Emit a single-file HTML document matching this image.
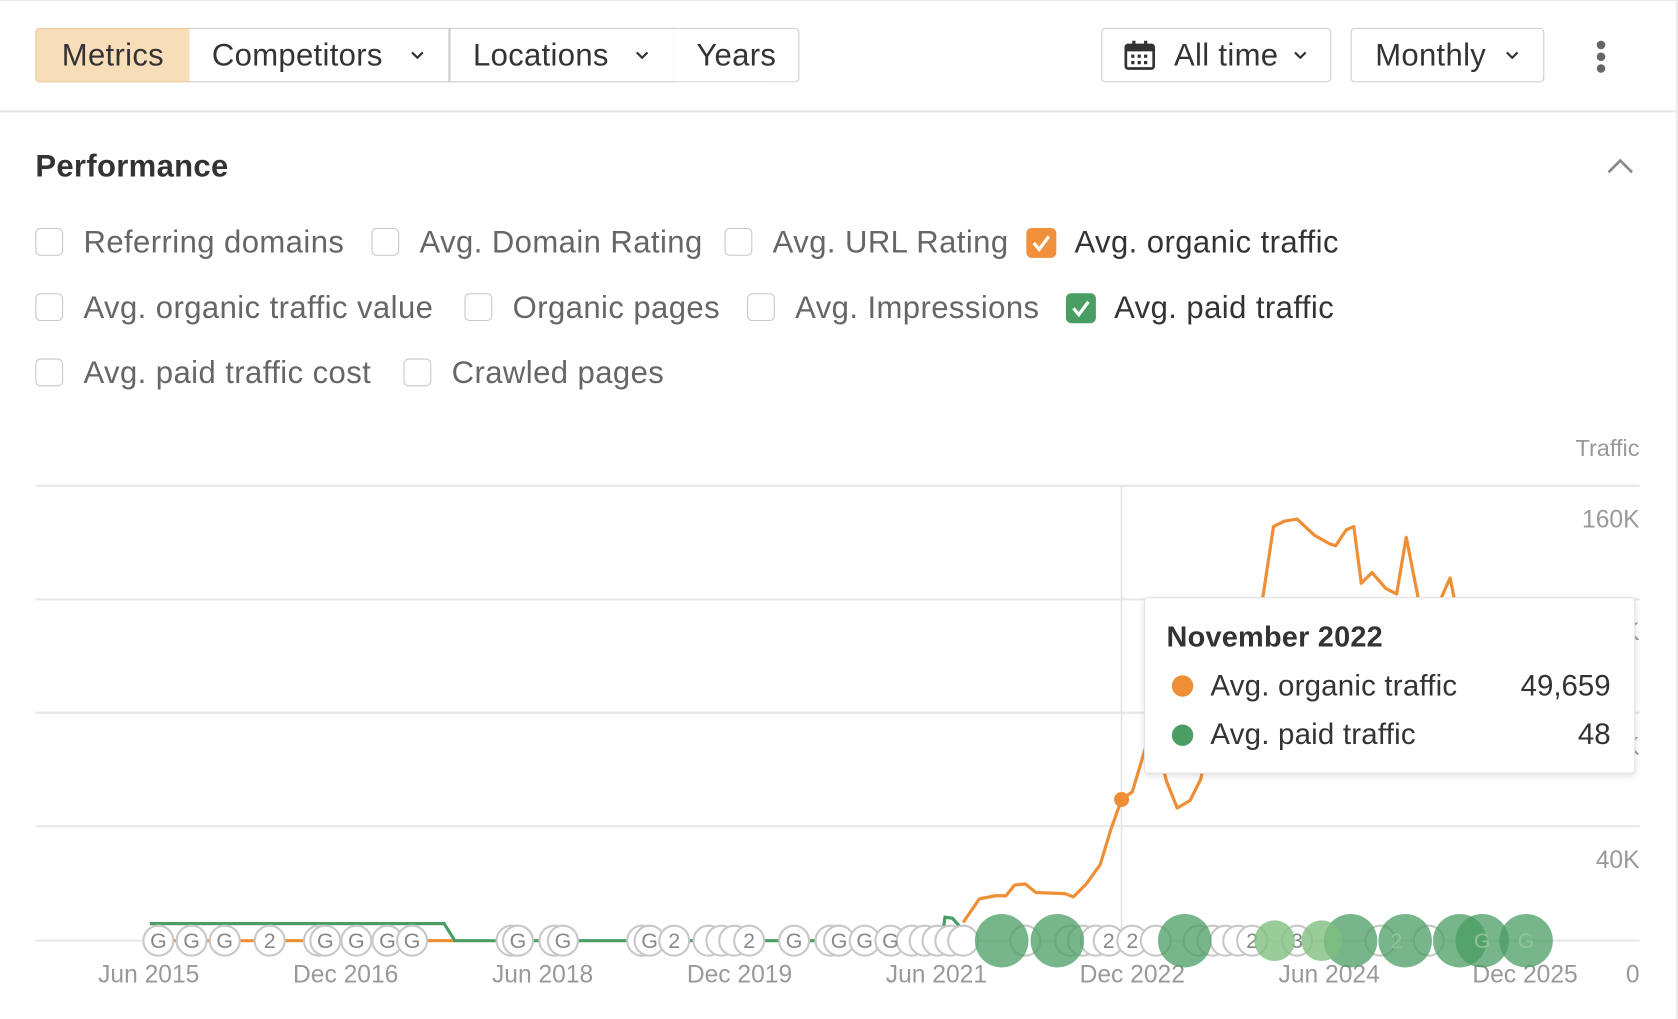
<!DOCTYPE html>
<html><head><meta charset="utf-8"><style>
html,body{margin:0;padding:0;background:#fff;overflow:hidden;width:1678px;height:1018px}
#w{position:absolute;left:0;top:0;width:1568px;height:952px;transform:scale(1.0702);transform-origin:0 0;font-family:"Liberation Sans",sans-serif;color:#333}
.a{position:absolute;white-space:nowrap}
.btn{position:absolute;top:26px;height:49px;border:1px solid #ccc;box-sizing:content-box;font-size:29px;letter-spacing:0.3px;line-height:51px;color:#333;background:#fff}
.cb{position:absolute;width:26px;height:26px;border:1.5px solid #c8c8c8;border-radius:5px;box-sizing:border-box}
.lab{position:absolute;font-size:29px;letter-spacing:0.4px;color:#666;line-height:30px}
.chk{position:absolute;width:28px;height:28px;border-radius:5px}
.chev{position:absolute;top:20px}
</style></head><body><div id="w">
<div class="a" style="left:0;top:0;width:1568px;height:1px;background:#e6e6e6"></div>
<div class="a" style="left:1566px;top:0;width:2px;height:952px;background:#ececec"></div>
<div class="a" style="left:0;top:103px;width:1566px;height:2px;background:#e8e8e8"></div>

<div class="btn" style="left:33px;width:143px;background:#f8ddb9;border-color:#e8c9a0;border-radius:4px 0 0 4px;text-align:center">Metrics</div>
<div class="btn" style="left:177px;width:242px;border-left:none"><span style="position:absolute;left:21px">Competitors</span><svg class="chev" style="left:206px" width="14" height="10"><path d="M2 2 L7 7 L12 2" fill="none" stroke="#333" stroke-width="2"/></svg></div>
<div class="btn" style="left:420px;width:209px"><span style="position:absolute;left:21px">Locations</span><svg class="chev" style="left:172px" width="14" height="10"><path d="M2 2 L7 7 L12 2" fill="none" stroke="#333" stroke-width="2"/></svg></div>
<div class="btn" style="left:630px;width:116px;border-left:none;border-radius:0 4px 4px 0;text-align:center">Years</div>

<div class="btn" style="left:1029px;width:213px;border-radius:4px">
<svg style="position:absolute;left:20px;top:11px" width="30" height="28" viewBox="0 0 30 28"><rect x="2" y="4" width="26" height="22" rx="2" fill="none" stroke="#333" stroke-width="2.5"/><rect x="2" y="4" width="26" height="6" fill="#333"/><rect x="8" y="0" width="3" height="6" fill="#333"/><rect x="19" y="0" width="3" height="6" fill="#333"/><g fill="#333"><rect x="7" y="13" width="3" height="3"/><rect x="13" y="13" width="3" height="3"/><rect x="19" y="13" width="3" height="3"/><rect x="7" y="19" width="3" height="3"/><rect x="13" y="19" width="3" height="3"/><rect x="19" y="19" width="3" height="3"/></g></svg>
<span style="position:absolute;left:67px">All time</span><svg class="chev" style="left:178px" width="14" height="10"><path d="M2 2 L7 7 L12 2" fill="none" stroke="#333" stroke-width="2"/></svg></div>
<div class="btn" style="left:1262px;width:179px;border-radius:4px"><span style="position:absolute;left:22px">Monthly</span><svg class="chev" style="left:143px" width="14" height="10"><path d="M2 2 L7 7 L12 2" fill="none" stroke="#333" stroke-width="2"/></svg></div>
<div class="a" style="left:1492px;top:38px;width:8px;height:8px;border-radius:4px;background:#666"></div>
<div class="a" style="left:1492px;top:49px;width:8px;height:8px;border-radius:4px;background:#666"></div>
<div class="a" style="left:1492px;top:60px;width:8px;height:8px;border-radius:4px;background:#666"></div>

<div class="a" style="left:33px;top:140px;font-size:29px;letter-spacing:0.3px;font-weight:bold;color:#333">Performance</div>
<svg class="a" style="left:1500px;top:146px" width="28" height="18"><path d="M3 15 L14 4 L25 15" fill="none" stroke="#888" stroke-width="2.5"/></svg>

<div class="cb" style="left:33px;top:213px"></div><div class="lab" style="left:78px;top:212px">Referring domains</div>
<div class="cb" style="left:347px;top:213px"></div><div class="lab" style="left:392px;top:212px">Avg. Domain Rating</div>
<div class="cb" style="left:677px;top:213px"></div><div class="lab" style="left:722px;top:212px">Avg. URL Rating</div>
<div class="chk" style="left:959px;top:213px;background:#f0903a"><svg width="28" height="28"><path d="M7 14 L12 20 L21 8" fill="none" stroke="#fff" stroke-width="3"/></svg></div><div class="lab" style="left:1004px;top:212px;color:#333">Avg. organic traffic</div>

<div class="cb" style="left:33px;top:274px"></div><div class="lab" style="left:78px;top:273px">Avg. organic traffic value</div>
<div class="cb" style="left:434px;top:274px"></div><div class="lab" style="left:479px;top:273px">Organic pages</div>
<div class="cb" style="left:698px;top:274px"></div><div class="lab" style="left:743px;top:273px">Avg. Impressions</div>
<div class="chk" style="left:996px;top:274px;background:#4a9e63"><svg width="28" height="28"><path d="M7 14 L12 20 L21 8" fill="none" stroke="#fff" stroke-width="3"/></svg></div><div class="lab" style="left:1041px;top:273px;color:#333">Avg. paid traffic</div>

<div class="cb" style="left:33px;top:335px"></div><div class="lab" style="left:78px;top:334px">Avg. paid traffic cost</div>
<div class="cb" style="left:377px;top:335px"></div><div class="lab" style="left:422px;top:334px">Crawled pages</div>

<svg class="a" style="left:0;top:0" width="1568" height="952" font-family="Liberation Sans, sans-serif">
<text x="1532" y="426" text-anchor="end" font-size="22" fill="#999">Traffic</text>
<g stroke="#e8e8e8" stroke-width="2"><line x1="33" y1="454" x2="1532" y2="454"/><line x1="33" y1="560" x2="1532" y2="560"/><line x1="33" y1="666" x2="1532" y2="666"/><line x1="33" y1="772" x2="1532" y2="772"/><line x1="33" y1="879" x2="1532" y2="879"/></g>
<line x1="1048" y1="454" x2="1048" y2="879" stroke="#e4e4e4" stroke-width="1.5"/>
<g font-size="23" fill="#999" text-anchor="end"><text x="1532" y="493">160K</text><text x="1532" y="598">K</text><text x="1532" y="705">K</text><text x="1532" y="811">40K</text><text x="1532" y="918">0</text></g>
<g font-size="23" fill="#999" text-anchor="middle"><text x="139" y="918">Jun 2015</text><text x="323" y="918">Dec 2016</text><text x="507" y="918">Jun 2018</text><text x="691" y="918">Dec 2019</text><text x="875" y="918">Jun 2021</text><text x="1058" y="918">Dec 2022</text><text x="1242" y="918">Jun 2024</text><text x="1425" y="918">Dec 2025</text></g>
<polyline fill="none" stroke="#ef8f35" stroke-width="3" points="140,879 425,879"/>
<polyline fill="none" stroke="#4a9e63" stroke-width="3" points="140,863 415,863 425,879 880,879 883,857 890,858 897,866"/>
<polyline fill="none" stroke="#ef8f35" stroke-width="3" stroke-linejoin="round" points="900,862 915,840 930,837 940,837 948,827 958,826 968,834 995,835 1003,838 1015,826 1028,808 1038,775 1048,747 1058,740 1070,700 1080,690 1090,730 1100,755 1112,748 1122,728 1140,640 1170,580 1180,558 1190,492 1200,487 1212,485 1228,500 1242,508 1248,510 1258,495 1265,492 1272,545 1282,535 1295,550 1305,555 1314,502 1325,558 1340,600 1347,558 1355,540 1360,565"/>
<circle cx="1048" cy="747" r="7" fill="#ef8f35"/>
<g fill="#fff" stroke="#c8c8c8" stroke-width="2" >
<circle cx="148" cy="879" r="14"/><circle cx="179" cy="879" r="14"/><circle cx="210" cy="879" r="14"/><circle cx="252" cy="879" r="14"/><circle cx="298" cy="879" r="14"/><circle cx="304" cy="879" r="14"/><circle cx="333" cy="879" r="14"/><circle cx="362" cy="879" r="14"/><circle cx="385" cy="879" r="14"/><circle cx="478" cy="879" r="14"/><circle cx="484" cy="879" r="14"/><circle cx="518" cy="879" r="14"/><circle cx="526" cy="879" r="14"/><circle cx="600" cy="879" r="14"/><circle cx="607" cy="879" r="14"/><circle cx="630" cy="879" r="14"/><circle cx="662" cy="879" r="14"/><circle cx="674" cy="879" r="14"/><circle cx="686" cy="879" r="14"/><circle cx="700" cy="879" r="14"/><circle cx="742" cy="879" r="14"/><circle cx="776" cy="879" r="14"/><circle cx="784" cy="879" r="14"/><circle cx="808" cy="879" r="14"/><circle cx="832" cy="879" r="14"/><circle cx="852" cy="879" r="14"/><circle cx="864" cy="879" r="14"/><circle cx="876" cy="879" r="14"/><circle cx="888" cy="879" r="14"/><circle cx="900" cy="879" r="14"/><circle cx="958" cy="879" r="14"/><circle cx="1000" cy="879" r="14"/><circle cx="1012" cy="879" r="14"/><circle cx="1024" cy="879" r="14"/><circle cx="1036" cy="879" r="14"/><circle cx="1058" cy="879" r="14"/><circle cx="1080" cy="879" r="14"/><circle cx="1120" cy="879" r="14"/><circle cx="1133" cy="879" r="14"/><circle cx="1145" cy="879" r="14"/><circle cx="1157" cy="879" r="14"/><circle cx="1170" cy="879" r="14"/><circle cx="1212" cy="879" r="14"/><circle cx="1290" cy="879" r="14"/><circle cx="1335" cy="879" r="14"/>
</g>
<g font-size="20" fill="#888" text-anchor="middle"><text x="148" y="886">G</text><text x="179" y="886">G</text><text x="210" y="886">G</text><text x="252" y="886">2</text><text x="304" y="886">G</text><text x="333" y="886">G</text><text x="362" y="886">G</text><text x="385" y="886">G</text><text x="484" y="886">G</text><text x="526" y="886">G</text><text x="607" y="886">G</text><text x="630" y="886">2</text><text x="700" y="886">2</text><text x="742" y="886">G</text><text x="784" y="886">G</text><text x="808" y="886">G</text><text x="832" y="886">G</text><text x="1036" y="886">2</text><text x="1058" y="886">2</text><text x="1170" y="886">2</text><text x="1212" y="886">3</text></g>
<g fill="#4a9e63" fill-opacity="0.75">
<circle cx="936" cy="879" r="25"/><circle cx="988" cy="879" r="25"/><circle cx="1107" cy="879" r="25"/><circle cx="1262" cy="879" r="25"/><circle cx="1313" cy="879" r="25"/><circle cx="1364" cy="879" r="25"/><circle cx="1385" cy="879" r="25"/><circle cx="1426" cy="879" r="25"/></g>
<g fill="#7fbf7f" fill-opacity="0.8"><circle cx="1191" cy="879" r="19"/><circle cx="1235" cy="879" r="19"/></g>
<g font-size="20" fill="#8fc49c" text-anchor="middle"><text x="1385" y="886">G</text><text x="1426" y="886">G</text><text x="1305" y="886">2</text></g>
</svg>

<div class="a" style="left:1069px;top:558px;width:457px;height:163px;background:#fff;border:1px solid #e4e4e4;border-radius:4px;box-shadow:0 2px 6px rgba(0,0,0,0.12)"></div>
<div class="a" style="left:1090px;top:580px;font-size:27px;letter-spacing:0.2px;font-weight:bold;color:#333">November 2022</div>
<div class="a" style="left:1095px;top:631px;width:20px;height:20px;border-radius:10px;background:#ef8f35"></div>
<div class="a" style="left:1131px;top:625px;font-size:27.5px;letter-spacing:0.2px;color:#333">Avg. organic traffic</div>
<div class="a" style="left:1380px;top:625px;width:125px;text-align:right;font-size:27.5px;color:#333">49,659</div>
<div class="a" style="left:1095px;top:677px;width:20px;height:20px;border-radius:10px;background:#4a9e63"></div>
<div class="a" style="left:1131px;top:670px;font-size:27.5px;letter-spacing:0.2px;color:#333">Avg. paid traffic</div>
<div class="a" style="left:1380px;top:670px;width:125px;text-align:right;font-size:27.5px;color:#333">48</div>
</div></body></html>
